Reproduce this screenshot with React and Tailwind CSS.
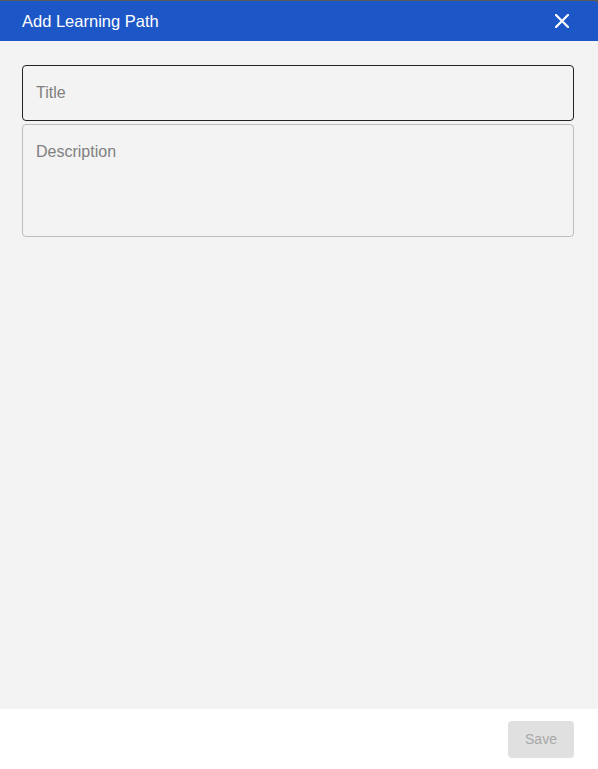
import React from "react";

export default function App() {
  return (
    <div className="w-[598px] h-[769px] flex flex-col bg-[#5a5a5a] pt-px" style={{ fontFamily: '"Liberation Sans", Arial, sans-serif' }}>
      <div className="flex flex-col flex-1 rounded-tr-[4px] overflow-hidden">
        <div className="h-[40px] shrink-0 bg-[#1d57c7] flex items-center justify-between pl-[22px] pr-[29px]">
          <span className="text-white text-[16.5px]">Add Learning Path</span>
          <svg width="14" height="14" viewBox="0 0 14 14" className="block">
            <path d="M1 1 L13 13 M13 1 L1 13" stroke="white" strokeWidth="2.2" strokeLinecap="square" />
          </svg>
        </div>
        <div className="flex-1 bg-[#f3f3f3] pl-[22px] pr-[24px] pt-[24px] flex flex-col gap-[3px]">
          <div className="h-[56px] border border-[#222] rounded-[4px] flex items-center px-[13px]">
            <span className="text-[16px] text-[#808080]">Title</span>
          </div>
          <div className="h-[113px] border border-[#bdbdbd] rounded-[4px] px-[13px] pt-[15px]">
            <span className="text-[16px] text-[#808080]">Description</span>
          </div>
        </div>
        <div className="h-[60px] shrink-0 bg-white flex items-start justify-end pr-[24px] pt-[12px]">
          <div className="w-[66px] h-[37px] bg-[#e0e0e0] rounded-[4px] flex items-center justify-center text-[14px] text-[#a8a8a8]">
            Save
          </div>
        </div>
      </div>
    </div>
  );
}
